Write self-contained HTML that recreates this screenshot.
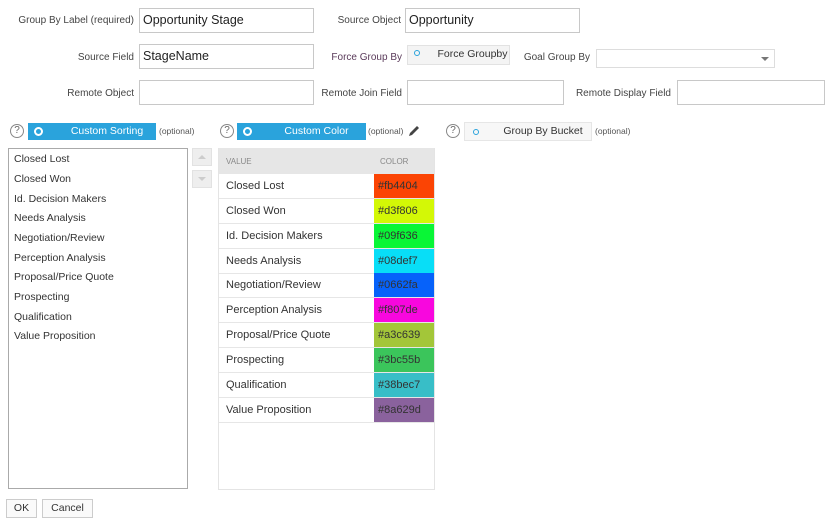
<!DOCTYPE html>
<html><head><meta charset="utf-8"><style>
*{box-sizing:border-box}
body{margin:0;width:830px;height:522px;background:#fff;font-family:"Liberation Sans",sans-serif;position:relative;overflow:hidden;color:#333}
.a{position:absolute}
.lbl{font-size:10px;color:#444;text-align:right;white-space:nowrap}
.inp{border:1px solid #c8c8c8;background:#fff;font-size:12.5px;color:#222;padding:4px 3px;height:25px}
.q{width:14px;height:14px;border:1px solid #888;border-radius:50%;font-size:10px;color:#666;text-align:center;line-height:12px}
.tb{height:17px;background:#2aa3dc;color:#fff;font-size:10.5px;line-height:17px;text-align:center}
.tb .c{position:absolute;left:6px;top:4px;width:9px;height:9px;border:2px solid #fff;border-radius:50%}
.opt{font-size:8.5px;color:#555}
.li{position:absolute;left:14px;font-size:10.5px;color:#333}
.row{position:absolute;left:219px;width:215px;height:25px;border-bottom:1px solid #e6e6e6;font-size:11px;color:#333}
.row span{position:absolute;left:7px;top:6px}
.row b{position:absolute;left:155px;top:0;width:60px;height:24px;font-weight:normal;font-size:11px;line-height:24px;padding-left:4px;color:#333}
.btn{border:1px solid #ccc;background:#fafafa;font-size:10.5px;color:#333;text-align:center;line-height:17px;height:19px}
</style></head><body>
<div class="a lbl" style="left:0;width:134px;top:15px">Group By Label (required)</div>
<div class="a inp" style="left:139px;top:8px;width:175px">Opportunity Stage</div>
<div class="a lbl" style="left:320px;width:81px;top:15px">Source Object</div>
<div class="a inp" style="left:405px;top:8px;width:175px">Opportunity</div>

<div class="a lbl" style="left:0;width:134px;top:52px">Source Field</div>
<div class="a inp" style="left:139px;top:44px;width:175px">StageName</div>
<div class="a lbl" style="left:320px;width:82px;top:52px;color:#5a3a5a">Force Group By</div>
<div class="a btn" style="left:407px;top:45px;width:103px;height:20px;background:#f4f4f4;border-color:#e2e2e2"><span class="a" style="left:6px;top:4px;width:6px;height:6px;border:1.5px solid #2aa3dc;border-radius:50%"></span><span style="padding-left:28px">Force Groupby</span></div>
<div class="a lbl" style="left:520px;width:70px;top:52px">Goal Group By</div>
<div class="a" style="left:596px;top:49px;width:179px;height:19px;border:1px solid #ddd"><span class="a" style="right:5px;top:7px;width:0;height:0;border-left:4px solid transparent;border-right:4px solid transparent;border-top:4px solid #777"></span></div>

<div class="a lbl" style="left:0;width:134px;top:88px">Remote Object</div>
<div class="a inp" style="left:139px;top:80px;width:175px"></div>
<div class="a lbl" style="left:320px;width:82px;top:88px">Remote Join Field</div>
<div class="a inp" style="left:407px;top:80px;width:157px"></div>
<div class="a lbl" style="left:570px;width:101px;top:88px">Remote Display Field</div>
<div class="a inp" style="left:677px;top:80px;width:148px"></div>

<div class="a q" style="left:10px;top:124px">?</div>
<div class="a tb" style="left:28px;top:123px;width:128px"><span class="c"></span><span style="padding-left:30px">Custom Sorting</span></div>
<div class="a opt" style="left:159px;top:126px">(optional)</div>
<div class="a q" style="left:220px;top:124px">?</div>
<div class="a tb" style="left:237px;top:123px;width:129px"><span class="c"></span><span style="padding-left:30px">Custom Color</span></div>
<div class="a opt" style="left:368px;top:126px">(optional)</div>
<svg class="a" style="left:407px;top:124px" width="14" height="14" viewBox="0 0 14 14"><path d="M2 12 L3 9 L10 2 L12 4 L5 11 Z" fill="#444"/></svg>
<div class="a q" style="left:446px;top:124px">?</div>
<div class="a btn" style="left:464px;top:122px;width:128px;background:#f7f7f7;border-color:#e6e6e6"><span class="a" style="left:8px;top:6px;width:6px;height:6px;border:1.5px solid #2aa3dc;border-radius:50%"></span><span style="padding-left:30px">Group By Bucket</span></div>
<div class="a opt" style="left:595px;top:126px">(optional)</div>

<div class="a" style="left:8px;top:148px;width:180px;height:341px;border:1px solid #aaa"></div>
<div class="li" style="top:153px">Closed Lost</div>
<div class="li" style="top:173px">Closed Won</div>
<div class="li" style="top:193px">Id. Decision Makers</div>
<div class="li" style="top:212px">Needs Analysis</div>
<div class="li" style="top:232px">Negotiation/Review</div>
<div class="li" style="top:252px">Perception Analysis</div>
<div class="li" style="top:271px">Proposal/Price Quote</div>
<div class="li" style="top:291px">Prospecting</div>
<div class="li" style="top:311px">Qualification</div>
<div class="li" style="top:330px">Value Proposition</div>
<div class="a" style="left:192px;top:148px;width:20px;height:18px;background:#eee;border:1px solid #e2e2e2"><span class="a" style="left:5px;top:6px;border-left:4px solid transparent;border-right:4px solid transparent;border-bottom:4px solid #ccc"></span></div>
<div class="a" style="left:192px;top:170px;width:20px;height:18px;background:#eee;border:1px solid #e2e2e2"><span class="a" style="left:5px;top:6px;border-left:4px solid transparent;border-right:4px solid transparent;border-top:4px solid #ccc"></span></div>

<div class="a" style="left:218px;top:148px;width:217px;height:342px;border:1px solid #e4e4e4"></div>
<div class="a" style="left:219px;top:148px;width:215px;height:26px;background:#e6e6e6;font-size:8px;color:#888"><span class="a" style="left:7px;top:9px">VALUE</span><span class="a" style="left:161px;top:9px">COLOR</span></div>
<div class="row" style="top:174px"><span>Closed Lost</span><b style="background:#fb4404">#fb4404</b></div>
<div class="row" style="top:199px"><span>Closed Won</span><b style="background:#d3f806">#d3f806</b></div>
<div class="row" style="top:224px"><span>Id. Decision Makers</span><b style="background:#09f636">#09f636</b></div>
<div class="row" style="top:249px"><span>Needs Analysis</span><b style="background:#08def7">#08def7</b></div>
<div class="row" style="top:273px"><span>Negotiation/Review</span><b style="background:#0662fa">#0662fa</b></div>
<div class="row" style="top:298px"><span>Perception Analysis</span><b style="background:#f807de">#f807de</b></div>
<div class="row" style="top:323px"><span>Proposal/Price Quote</span><b style="background:#a3c639">#a3c639</b></div>
<div class="row" style="top:348px"><span>Prospecting</span><b style="background:#3bc55b">#3bc55b</b></div>
<div class="row" style="top:373px"><span>Qualification</span><b style="background:#38bec7">#38bec7</b></div>
<div class="row" style="top:398px"><span>Value Proposition</span><b style="background:#8a629d">#8a629d</b></div>

<div class="a btn" style="left:6px;top:499px;width:31px">OK</div>
<div class="a btn" style="left:42px;top:499px;width:51px">Cancel</div>
</body></html>
